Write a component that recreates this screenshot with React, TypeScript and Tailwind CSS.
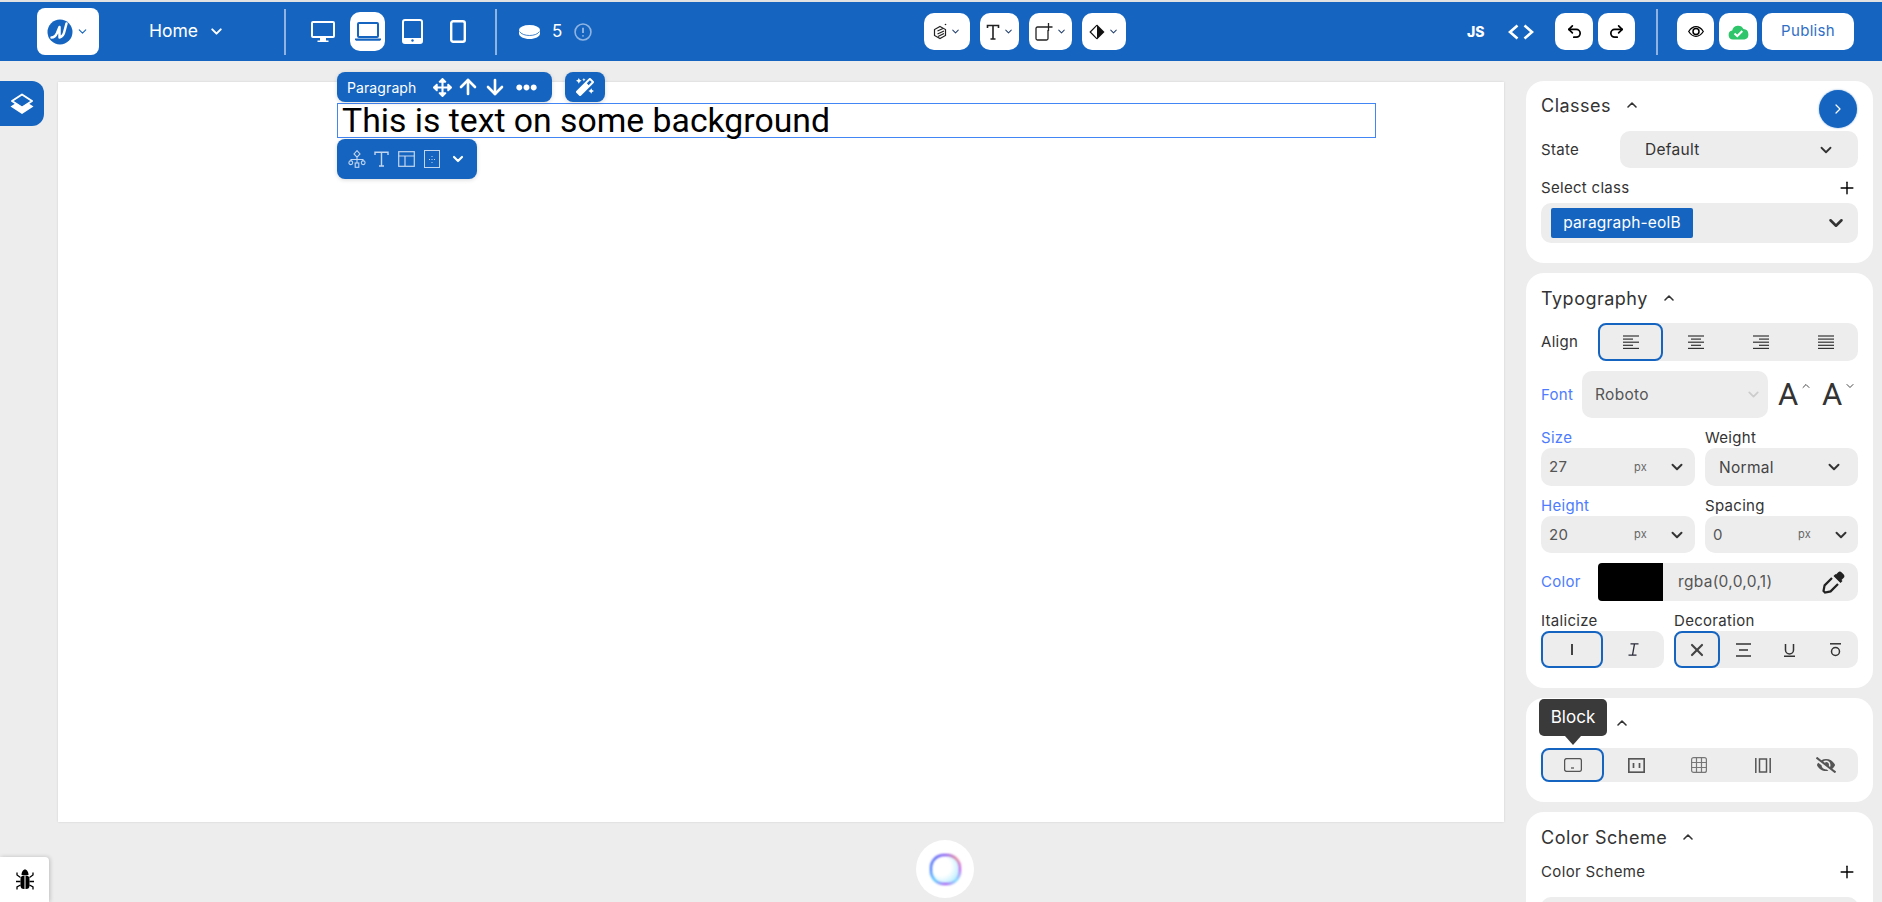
import React from "react";
import { ChevronDown, ChevronUp, ChevronRight, ArrowUp, ArrowDown, Plus, Undo2, Redo2, X } from "lucide-react";
import { FaArrowsAlt, FaEllipsisH, FaMagic, FaEyeSlash } from "react-icons/fa";

const Lines = ({ kind }: { kind: "left" | "center" | "right" | "justify" }) => {
  const rows = kind === "justify" ? [16, 16, 16, 16, 16] : [16, 10, 16, 10, 16];
  return (
    <svg width="16" height="15" viewBox="0 0 16 15" stroke="#333333" strokeWidth="1.2">
      {rows.map((w, i) => {
        const x = kind === "left" || kind === "justify" ? 0 : kind === "center" ? (16 - w) / 2 : 16 - w;
        return <line key={i} x1={x} x2={x + w} y1={1 + i * 3.1} y2={1 + i * 3.1} />;
      })}
    </svg>
  );
};

const Section = ({ title, className, children }: { title: string; className: string; children: React.ReactNode }) => (
  <section className={`relative rounded-[18px] bg-white px-[15px] pb-[20px] ${className}`}>
    <div className="flex h-[22px] items-center text-[18px] tracking-[0.5px] text-[#333333]">
      <span className="pt-[1px]">{title}</span>
      <ChevronUp size={16} strokeWidth={2.4} className="ml-[13px] text-[#333333]" />
    </div>
    {children}
  </section>
);

const UnitInput = ({ value, className }: { value: string; className: string }) => (
  <div className={`flex items-center rounded-[10px] bg-[#ededed] pl-[8px] text-[15px] tracking-[0.3px] text-[#555555] ${className}`}>
    <span className="w-[85px] pt-[1px]">{value}</span>
    <span className="w-[32px] text-[11px] text-[#666666]">px</span>
    <ChevronDown size={18} strokeWidth={2.6} className="ml-[2px] text-[#333333]" />
  </div>
);

const HeaderBtn = ({ className, children }: { className: string; children: React.ReactNode }) => (
  <div className={`flex h-[37px] items-center justify-center rounded-[10px] bg-white ${className}`}>{children}</div>
);

const Small = () => <ChevronDown size={11} strokeWidth={2.2} className="ml-[3px] text-[#24406e]" />;

const Label = ({ className, children }: { className: string; children: React.ReactNode }) => (
  <div className={`h-[20px] text-[15px] leading-[20px] tracking-[0.3px] ${className}`}>{children}</div>
);

export default function App() {
  return (
    <div className="relative h-[902px] w-[1882px] overflow-hidden bg-[#ededed] font-[family-name:Inter,sans-serif] text-[#333333]">
      <div className="h-[2px] bg-[#e2e2e2]" />
      <header className="flex h-[59px] items-center bg-[#1565c0] text-white">
        <div className="flex w-[284px] items-center pl-[37px]">
          <div className="flex h-[47px] w-[62px] items-center justify-center rounded-[8px] bg-white">
            <svg width="26" height="26" viewBox="0 0 26 26">
              <circle cx="13" cy="13" r="12.5" fill="#1565c0" />
              <path d="M4.5 18.5 Q8 18.5 10 14 L12.5 8 L12.5 18.5 Q16.5 17.5 17.5 12 L19.5 4.5" fill="none" stroke="#fff" strokeWidth="2.5" strokeLinecap="round" strokeLinejoin="round" />
            </svg>
            <ChevronDown size={13} strokeWidth={2} className="ml-[3px] text-[#1565c0]" />
          </div>
          <div className="ml-[50px] flex items-center text-[17.5px]">
            <span>Home</span>
            <ChevronDown size={17} strokeWidth={2.8} className="ml-[10px]" />
          </div>
        </div>
        <div className="h-[46px] w-[2px] bg-[#8fb4e2]" />
        <div className="flex w-[209px] items-center">
          <svg className="ml-[25px]" width="24" height="22" viewBox="0 0 24 22" fill="none">
            <rect x="1" y="1" width="22" height="15" rx="1" stroke="#fff" strokeWidth="2" />
            <path d="M9 17h6v2.5H9zM6.5 19.5h11V21h-11z" fill="#fff" />
          </svg>
          <div className="ml-[15px] flex h-[39px] w-[35px] items-center justify-center rounded-[10px] bg-white">
            <svg width="26" height="19" viewBox="0 0 26 19" fill="none">
              <rect x="3" y="1" width="20" height="14" rx="1" stroke="#1565c0" strokeWidth="2" />
              <path d="M0 16.5h26v1.2l-1 1H1l-1-1z" fill="#1565c0" />
            </svg>
          </div>
          <svg className="ml-[17px]" width="21" height="25" viewBox="0 0 21 25" fill="none">
            <rect x="1" y="1" width="19" height="23" rx="2" stroke="#fff" strokeWidth="2" />
            <rect x="1" y="19" width="19" height="5" fill="#fff" />
            <circle cx="10.5" cy="21.5" r="1.2" fill="#1565c0" />
          </svg>
          <svg className="ml-[27px]" width="16" height="23" viewBox="0 0 16 23" fill="none">
            <rect x="1.2" y="1.2" width="13.6" height="20.6" rx="2" stroke="#fff" strokeWidth="2.4" />
          </svg>
        </div>
        <div className="h-[46px] w-[2px] bg-[#8fb4e2]" />
        <div className="flex w-[427px] items-center">
          <svg className="ml-[22px]" width="21" height="14" viewBox="0 0 21 14">
            <path d="M0 5.5v3C0 11.5 4.7 14 10.5 14S21 11.5 21 8.5v-3z" fill="#fff" />
            <ellipse cx="10.5" cy="5" rx="10.5" ry="5" fill="#fff" />
            <path d="M0.5 6.5C2 9 6 10.5 10.5 10.5S19 9 20.5 6.5" fill="none" stroke="#1565c0" strokeWidth="0.8" />
          </svg>
          <span className="ml-[12px] text-[17px]">5</span>
          <svg className="ml-[12px]" width="18" height="18" viewBox="0 0 17 17" fill="none" stroke="#8fb4e2" strokeWidth="1.5">
            <circle cx="8.5" cy="8.5" r="7.5" />
            <path d="M8.5 4.5v5M8.5 11.5v1.3" strokeWidth="1.8" />
          </svg>
        </div>
        <div className="flex items-center gap-[10px]">
          <HeaderBtn className="w-[46px]">
            <svg width="14" height="17" viewBox="0 0 14 17" fill="none" stroke="#222" strokeWidth="1.2">
              <path d="M7 3.5 12.5 6.5v6L7 15.5 1.5 12.5v-6z" />
              <path d="M4.5 8 10 5.5M4.5 11 11 8M5 13.5 11 10.5" />
              <circle cx="12.5" cy="1.5" r=".8" fill="#222" stroke="none" />
            </svg>
            <Small />
          </HeaderBtn>
          <HeaderBtn className="w-[39px]">
            <svg width="14" height="16" viewBox="0 0 14 16" fill="none" stroke="#222" strokeWidth="1.6">
              <path d="M1.5 4V1.5h11V4M7 1.5V15M4.5 15h5" />
            </svg>
            <Small />
          </HeaderBtn>
          <HeaderBtn className="w-[43px]">
            <svg width="18" height="18" viewBox="0 0 18 18" fill="none" stroke="#222" strokeWidth="1.3">
              <path d="M11 4H2.5a1.5 1.5 0 0 0-1.5 1.5v10A1.5 1.5 0 0 0 2.5 17h9a1.5 1.5 0 0 0 1.5-1.5V7M13.5 0v8M9.5 4h8" />
            </svg>
            <Small />
          </HeaderBtn>
          <HeaderBtn className="w-[44px]">
            <svg width="16" height="16" viewBox="0 0 16 16">
              <path d="M8 .5 15.5 8 8 15.5z" fill="#111" />
              <path d="M8 1.2 1.2 8 8 14.8" fill="none" stroke="#111" strokeWidth="1.2" />
            </svg>
            <Small />
          </HeaderBtn>
        </div>
        <div className="flex flex-1 items-center justify-end pr-[28px]">
          <span className="w-[18px] text-[14px] font-extrabold leading-none">JS</span>
          <svg className="ml-[23px]" width="26" height="16" viewBox="0 0 26 16" fill="none" stroke="#fff" strokeWidth="2.6">
            <path d="M9.5 1.5 2 8l7.5 6.5M16.5 1.5 24 8l-7.5 6.5" />
          </svg>
          <HeaderBtn className="ml-[21px] w-[38px]"><Undo2 size={17} strokeWidth={2.4} className="text-black" /></HeaderBtn>
          <HeaderBtn className="ml-[5px] w-[37px]"><Redo2 size={17} strokeWidth={2.4} className="text-black" /></HeaderBtn>
          <div className="ml-[21px] h-[46px] w-[2px] bg-[#8fb4e2]" />
          <HeaderBtn className="ml-[19px] w-[37px]">
            <svg width="16" height="11" viewBox="0 0 16 11" fill="none" stroke="#000" strokeWidth="1.3">
              <path d="M.7 5.5C3 2 5.5.7 8 .7s5 1.3 7.3 4.8C13 9 10.5 10.3 8 10.3S3 9 .7 5.5z" />
              <circle cx="8" cy="5.5" r="3" strokeWidth="1.5" />
            </svg>
          </HeaderBtn>
          <HeaderBtn className="ml-[5px] w-[38px]">
            <svg width="21" height="16" viewBox="0 0 21 16">
              <path d="M16.5 15.5H5a4.5 4.5 0 0 1-.8-8.9 6 6 0 0 1 11.3-1.5 5.3 5.3 0 0 1 1 10.4z" fill="#2fc56a" />
              <path d="M6.5 9.5 9.3 12l5-5" fill="none" stroke="#fff" strokeWidth="2" />
            </svg>
          </HeaderBtn>
          <HeaderBtn className="ml-[5px] w-[92px] text-[15px] tracking-[0.3px] text-[#2f6fc4]">Publish</HeaderBtn>
        </div>
      </header>

      <main className="flex">
        <div className="relative ml-[58px] mt-[21px] h-[740px] w-[1446px] bg-white pl-[279px] pt-[21px] shadow-[0_0_2px_rgba(0,0,0,0.12)]">
          <div className="absolute left-[279px] top-[-10px] flex h-[30px] w-[215px] items-center rounded-[8px] bg-[#1565c0] pl-[10px] text-white shadow-[0_1px_4px_rgba(0,0,0,0.15)]">
            <span className="w-[86px] text-[14px] tracking-[0.1px]">Paragraph</span>
            <FaArrowsAlt size={19} />
            <ArrowUp size={24} strokeWidth={2.6} className="ml-[4px]" />
            <ArrowDown size={24} strokeWidth={2.6} className="ml-[3px]" />
            <FaEllipsisH size={21} className="ml-[9px]" />
          </div>
          <div className="absolute left-[507px] top-[-10px] flex h-[30px] w-[40px] items-center justify-center rounded-[8px] bg-[#1565c0] text-white shadow-[0_1px_4px_rgba(0,0,0,0.15)]">
            <FaMagic size={18} />
          </div>
          <div className="h-[35px] w-[1039px] border border-[#4285f4] pl-[4px] font-[family-name:Roboto,sans-serif] text-[33.75px] leading-[34px] text-black">
            This is text on some background
          </div>
          <div className="absolute left-[279px] top-[57px] flex h-[40px] w-[140px] items-center rounded-[8px] bg-[#1565c0] pl-[11px] text-white shadow-[0_1px_4px_rgba(0,0,0,0.15)]">
            <svg width="18" height="18" viewBox="0 0 18 18" fill="none" stroke="#c3d6ef" strokeWidth="1.1">
              <path d="M9 .7 12 4 9 7.2 6 4zM9 7.2V13M3 11.5V9.5H15V11.5" />
              <circle cx="2.8" cy="12.7" r="1.9" />
              <circle cx="15.2" cy="12.7" r="1.9" />
              <rect x="7.2" y="13" width="3.6" height="4.3" />
            </svg>
            <svg className="ml-[8px]" width="15" height="16" viewBox="0 0 15 16" fill="none" stroke="#c3d6ef" strokeWidth="1.4">
              <path d="M1 4V1.2h13V4M7.5 1.2V15M5 15h5" />
            </svg>
            <svg className="ml-[9px]" width="17" height="16" viewBox="0 0 17 16" fill="none" stroke="#c3d6ef" strokeWidth="1.2">
              <rect x=".7" y=".7" width="15.6" height="14.6" />
              <path d="M.7 5h15.6M7 5v10.3" />
            </svg>
            <svg className="ml-[9px]" width="16" height="18" viewBox="0 0 16 18" fill="none" stroke="#c3d6ef" strokeWidth="1">
              <rect x=".5" y=".5" width="15" height="17" />
              <path d="M8 6v1M8 9v1M8 12v1M5 9.5h1M10 9.5h1" />
            </svg>
            <ChevronDown size={16} strokeWidth={3.2} className="ml-[10px]" />
          </div>
        </div>

        <aside className="ml-[22px] mt-[20px] flex w-[347px] flex-col gap-[10px]">
          <Section title="Classes" className="h-[182px] pt-[13px]">
            <button className="absolute right-[16px] top-[9px] flex h-[38px] w-[38px] items-center justify-center rounded-full bg-[#1565c0] text-white shadow-[0_0_2px_rgba(21,101,192,0.6)]">
              <ChevronRight size={16} strokeWidth={1.8} />
            </button>
            <div className="mt-[15px] flex h-[37px] items-center text-[15px] tracking-[0.3px]">
              <span className="w-[79px] pt-[1px]">State</span>
              <div className="flex h-full flex-1 items-center rounded-[10px] bg-[#ededed] pl-[25px] pr-[23px]">
                <span className="flex-1 pt-[1px] text-[15.5px]">Default</span>
                <ChevronDown size={18} strokeWidth={2.4} />
              </div>
            </div>
            <div className="mt-[10px] flex h-[20px] items-center justify-between pr-[1px] text-[15px] tracking-[0.3px]">
              <span>Select class</span>
              <Plus size={20} strokeWidth={1.7} className="text-black" />
            </div>
            <div className="mt-[5px] flex h-[40px] items-center rounded-[10px] bg-[#ededed] pl-[10px] pr-[11px]">
              <div className="flex h-[30px] w-[142px] items-center justify-center rounded-[2px] bg-[#1565c0] text-[15.5px] tracking-[0.2px] text-white">paragraph-eolB</div>
              <ChevronDown size={22} strokeWidth={2.8} className="ml-auto" />
            </div>
          </Section>

          <Section title="Typography" className="h-[415px] pt-[14px]">
            <div className="mt-[14px] flex h-[38px] items-center text-[15px] tracking-[0.3px]">
              <span className="w-[57px] pt-[1px]">Align</span>
              <div className="grid h-full flex-1 grid-cols-4 rounded-[10px] bg-[#ededed]">
                <div className="flex items-center justify-center rounded-[8px] border-2 border-[#1565c0]"><Lines kind="left" /></div>
                <div className="flex items-center justify-center"><Lines kind="center" /></div>
                <div className="flex items-center justify-center"><Lines kind="right" /></div>
                <div className="flex items-center justify-center"><Lines kind="justify" /></div>
              </div>
            </div>
            <div className="mt-[10px] flex h-[47px] items-center">
              <span className="w-[41px] pt-[1px] text-[15px] tracking-[0.3px] text-[#4d7cfe]">Font</span>
              <div className="flex h-full w-[186px] items-center rounded-[10px] bg-[#ededed] pl-[13px] pr-[6px] text-[15.5px] tracking-[0.3px] text-[#555555]">
                <span className="flex-1 pt-[1px]">Roboto</span>
                <ChevronDown size={17} strokeWidth={2.4} className="text-[#cccccc]" />
              </div>
              <div className="ml-[10px] flex w-[35px] items-start">
                <span className="font-[family-name:Roboto,sans-serif] text-[31px] leading-none text-[#333333]">A</span>
                <ChevronUp size={12} strokeWidth={1.8} className="ml-[2px] mt-[1px]" />
              </div>
              <div className="ml-[9px] flex w-[35px] items-start">
                <span className="font-[family-name:Roboto,sans-serif] text-[31px] leading-none text-[#333333]">A</span>
                <ChevronDown size={12} strokeWidth={1.8} className="ml-[2px] mt-[1px]" />
              </div>
            </div>
            <div className="mt-[10px] grid grid-cols-[154px_153px] gap-x-[10px]">
              <Label className="text-[#4d7cfe]">Size</Label>
              <Label className="text-[#333333]">Weight</Label>
              <UnitInput value="27" className="h-[38px]" />
              <div className="flex h-[38px] items-center rounded-[10px] bg-[#ededed] pl-[14px] pr-[15px] text-[15.5px] tracking-[0.3px] text-[#444444]">
                <span className="flex-1 pt-[1px]">Normal</span>
                <ChevronDown size={18} strokeWidth={2.6} className="text-[#333333]" />
              </div>
              <Label className="mt-[10px] text-[#4d7cfe]">Height</Label>
              <Label className="mt-[10px] text-[#333333]">Spacing</Label>
              <UnitInput value="20" className="h-[37px]" />
              <UnitInput value="0" className="h-[37px]" />
            </div>
            <div className="mt-[10px] flex h-[38px] items-center">
              <span className="w-[57px] pt-[1px] text-[15px] tracking-[0.3px] text-[#4d7cfe]">Color</span>
              <div className="flex h-full flex-1 items-center rounded-[10px] bg-[#ededed]">
                <div className="h-full w-[65px] rounded-l-[4px] bg-black" />
                <span className="ml-[15px] flex-1 text-[15.5px] tracking-[0.3px] text-[#555555]">rgba(0,0,0,1)</span>
                <svg className="mr-[13px]" width="23" height="23" viewBox="0 0 23 23" fill="none">
                  <path d="M14 3.5l2-2a2.6 2.6 0 0 1 3.7 0l1.8 1.8a2.6 2.6 0 0 1 0 3.7l-2 2 1 1-2 2-7-7 2-2z" fill="#222" />
                  <path d="M10 7 2.6 14.4 1.5 20l1.5 1.5 5.6-1.1L16 13" stroke="#222" strokeWidth="2.2" />
                </svg>
              </div>
            </div>
            <div className="mt-[10px] grid grid-cols-[123px_184px] gap-x-[10px]">
              <Label className="text-[#333333]">Italicize</Label>
              <Label className="text-[#333333]">Decoration</Label>
              <div className="grid h-[37px] grid-cols-2 rounded-[10px] bg-[#ededed]">
                <div className="flex items-center justify-center rounded-[8px] border-2 border-[#1565c0]">
                  <span className="h-[11px] w-[1.5px] bg-[#444444]" />
                </div>
                <div className="flex items-center justify-center">
                  <svg width="13" height="13" viewBox="0 0 13 13" fill="none" stroke="#2a2a3a" strokeWidth="1.3"><path d="M3.5.8h8M1.5 12.2h8M7.5.8l-2 11.4" /></svg>
                </div>
              </div>
              <div className="grid h-[37px] grid-cols-4 rounded-[10px] bg-[#ededed]">
                <div className="flex items-center justify-center rounded-[8px] border-2 border-[#1565c0]"><X size={20} strokeWidth={2.6} className="text-[#444444]" /></div>
                <div className="flex items-center justify-center">
                  <svg width="15" height="14" viewBox="0 0 15 14" fill="none" stroke="#333" strokeWidth="1.5"><path d="M0 1h15M3 7h9M0 13h15" /></svg>
                </div>
                <div className="flex items-center justify-center">
                  <svg width="11" height="14" viewBox="0 0 11 14" fill="none" stroke="#333" strokeWidth="1.5"><path d="M1.5 1v6a4 4 0 0 0 8 0V1M0 13.2h11" /></svg>
                </div>
                <div className="flex items-center justify-center">
                  <svg width="11" height="14" viewBox="0 0 11 14" fill="none" stroke="#333" strokeWidth="1.5"><path d="M0 .8h11" /><circle cx="5.5" cy="8.5" r="4" /></svg>
                </div>
              </div>
            </div>
          </Section>

          <Section title="Layout" className="h-[104px] pt-[14px]">
            <div className="absolute left-[13px] top-[1px] flex h-[37px] w-[68px] items-center justify-center rounded-[5px] bg-[#3a3a3a] text-[17px] text-white after:absolute after:left-[26px] after:top-[37px] after:border-x-[8px] after:border-t-[9px] after:border-x-transparent after:border-t-[#3a3a3a]">Block</div>
            <div className="mt-[14px] grid h-[34px] grid-cols-5 rounded-[10px] bg-[#ededed]">
              <div className="flex items-center justify-center rounded-[8px] border-2 border-[#1565c0]">
                <svg width="18" height="14" viewBox="0 0 18 14" fill="none" stroke="#555" strokeWidth="1.3"><rect x=".6" y=".6" width="16.8" height="12.8" rx="2" /><path d="M7 10h3" /></svg>
              </div>
              <div className="flex items-center justify-center">
                <svg width="17" height="15" viewBox="0 0 17 15" fill="none" stroke="#555" strokeWidth="1.7"><rect x=".8" y=".8" width="15.4" height="13.4" /><path d="M5.5 5v5M11.5 5v5" /></svg>
              </div>
              <div className="flex items-center justify-center">
                <svg width="16" height="16" viewBox="0 0 16 16" fill="none" stroke="#777" strokeWidth="1.2"><rect x=".6" y=".6" width="14.8" height="14.8" rx="2" /><path d="M5.5.6v14.8M10.5.6v14.8M.6 5.5h14.8M.6 10.5h14.8" /></svg>
              </div>
              <div className="flex items-center justify-center">
                <svg width="16" height="15" viewBox="0 0 16 15" fill="none" stroke="#555" strokeWidth="1.5"><path d="M.8 0v15M15.2 0v15" /><rect x="4.5" y="1" width="7" height="13" /></svg>
              </div>
              <div className="flex items-center justify-center"><FaEyeSlash size={20} className="text-[#555555]" /></div>
            </div>
          </Section>

          <Section title="Color Scheme" className="h-[120px] shrink-0 pt-[14px]">
            <div className="mt-[14px] flex h-[20px] items-center justify-between pr-[1px] text-[15px] tracking-[0.35px]">
              <span>Color Scheme</span>
              <Plus size={20} strokeWidth={1.7} className="text-black" />
            </div>
            <div className="mt-[15px] h-[40px] rounded-[10px] bg-[#ededed]" />
          </Section>
        </aside>
      </main>

      <div className="absolute left-0 top-[81px] flex h-[45px] w-[44px] items-center justify-center rounded-r-[12px] bg-[#1565c0]">
        <svg width="26" height="22" viewBox="0 0 26 22">
          <path d="M1.5 13.5 13 21l11.5-7.5L19 10l-6 4-6-4z" fill="#fff" />
          <path d="M13 1.5 23 8l-10 6.5L3 8z" fill="none" stroke="#fff" strokeWidth="2" strokeLinejoin="round" />
        </svg>
      </div>
      <div className="absolute left-0 top-[857px] flex h-[45px] w-[49px] items-center justify-center rounded-tr-[4px] bg-white shadow-[1px_0_4px_rgba(0,0,0,0.2)]">
        <svg width="20" height="21" viewBox="0 0 20 21">
          <path d="M6.5 6C6.5 3 8 .5 10 .5S13.5 3 13.5 6z" fill="#000" />
          <rect x="5.5" y="6.5" width="9" height="13.5" rx="3.5" fill="#000" />
          <path d="M10 6.5V20" stroke="#fff" strokeWidth="1" />
          <path d="M5.5 8.5 2 6V3.5M14.5 8.5 18 6V3.5M5.5 12.5H1M14.5 12.5H19M5.5 16 2 18v2.5M14.5 16l3.5 2v2.5" fill="none" stroke="#000" strokeWidth="1.3" />
        </svg>
      </div>
      <div className="absolute left-[916px] top-[840px] flex h-[58px] w-[58px] items-center justify-center rounded-full bg-white">
        <div className="h-[31px] w-[31px] rounded-[45%] bg-[conic-gradient(#7a40f0,#e0708a,#c050f0,#70d8ff,#a040f0,#40c0ff,#2b6bff,#3a50f0,#7a40f0)] p-[2px] blur-[1px]">
          <div className="h-full w-full rounded-[45%] bg-[radial-gradient(circle_at_35%_40%,#ffffff_40%,#98e4ff_100%)]" />
        </div>
      </div>
    </div>
  );
}
